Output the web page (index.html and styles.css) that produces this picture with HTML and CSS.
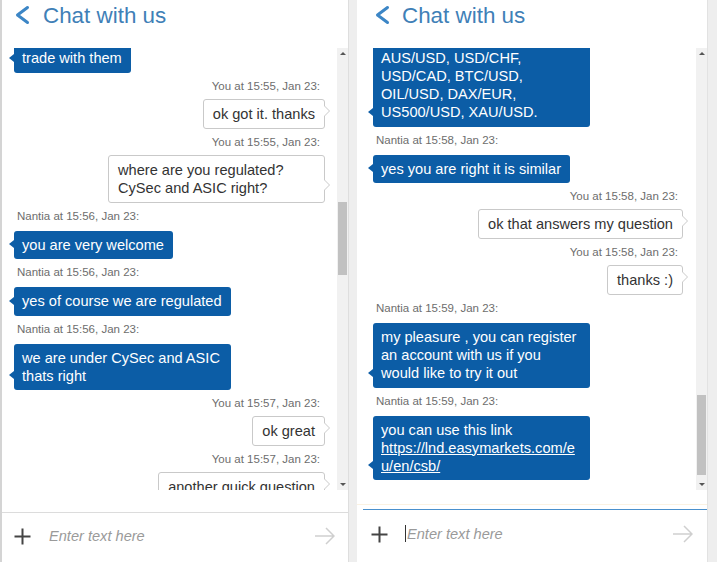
FILE: index.html
```html
<!DOCTYPE html>
<html lang="en">
<head>
<meta charset="utf-8">
<title>Chat with us</title>
<link rel="stylesheet" href="styles.css">
</head>
<body>
<div class="screen">
  <section class="panel panel--left">
    <header class="head">
      <svg class="chev" width="16" height="22" viewBox="0 0 16 22"><path d="M13.5 3.5 L3.5 11 L13.5 18.5" fill="none" stroke="#3c86c6" stroke-width="3" stroke-linecap="round" stroke-linejoin="round"/></svg>
      <h1 class="title">Chat with us</h1>
    </header>
    <div class="body">
      <div class="list">
        <div class="msg msg--agent first">trade with them</div>
        <div class="ts ts--user">You at 15:55, Jan 23:</div>
        <div class="msg msg--user">ok got it. thanks</div>
        <div class="ts ts--user">You at 15:55, Jan 23:</div>
        <div class="msg msg--user">where are you regulated? CySec and ASIC right?</div>
        <div class="ts ts--agent">Nantia at 15:56, Jan 23:</div>
        <div class="msg msg--agent">you are very welcome</div>
        <div class="ts ts--agent">Nantia at 15:56, Jan 23:</div>
        <div class="msg msg--agent">yes of course we are regulated</div>
        <div class="ts ts--agent">Nantia at 15:56, Jan 23:</div>
        <div class="msg msg--agent">we are under CySec and ASIC thats right</div>
        <div class="ts ts--user">You at 15:57, Jan 23:</div>
        <div class="msg msg--user">ok great</div>
        <div class="ts ts--user">You at 15:57, Jan 23:</div>
        <div class="msg msg--user">another quick question</div>
      </div>
      <div class="scrollbar">
        <div class="sb-btn"><span class="sb-up"></span></div>
        <div class="sb-track"><div class="sb-thumb" style="margin-top:143px;height:73px"></div></div>
        <div class="sb-btn"><span class="sb-down"></span></div>
      </div>
    </div>
    <div class="spacer"></div>
    <div class="composer composer--left">
      <svg class="plus" width="17" height="17" viewBox="0 0 17 17"><path d="M8.5 0.5 V16.5 M0.5 8.5 H16.5" stroke="#444" stroke-width="2"/></svg>
      <span class="placeholder">Enter text here</span>
      <svg class="send" width="20" height="18" viewBox="0 0 20 18"><path d="M0 9 H19 M11 1 L19 9 L11 17" fill="none" stroke="#cfcfcf" stroke-width="1.5"/></svg>
    </div>
  </section>

  <div class="divider"></div>

  <section class="panel panel--right">
    <header class="head">
      <svg class="chev" width="16" height="22" viewBox="0 0 16 22"><path d="M13.5 3.5 L3.5 11 L13.5 18.5" fill="none" stroke="#3c86c6" stroke-width="3" stroke-linecap="round" stroke-linejoin="round"/></svg>
      <h1 class="title">Chat with us</h1>
    </header>
    <div class="body">
      <div class="list">
        <div class="msg msg--agent first">AUS/USD, USD/CHF, USD/CAD, BTC/USD, OIL/USD, DAX/EUR, US500/USD, XAU/USD.</div>
        <div class="ts ts--agent">Nantia at 15:58, Jan 23:</div>
        <div class="msg msg--agent">yes you are right it is similar</div>
        <div class="ts ts--user">You at 15:58, Jan 23:</div>
        <div class="msg msg--user">ok that answers my question</div>
        <div class="ts ts--user">You at 15:58, Jan 23:</div>
        <div class="msg msg--user">thanks :)</div>
        <div class="ts ts--agent">Nantia at 15:59, Jan 23:</div>
        <div class="msg msg--agent">my pleasure , you can register an account with us if you would like to try it out</div>
        <div class="ts ts--agent">Nantia at 15:59, Jan 23:</div>
        <div class="msg msg--agent">you can use this link <a class="link" href="#">https://lnd.easymarkets.com/e<br>u/en/csb/</a></div>
      </div>
      <div class="scrollbar">
        <div class="sb-btn"><span class="sb-up"></span></div>
        <div class="sb-track"><div class="sb-thumb" style="margin-top:336px;height:80px"></div></div>
        <div class="sb-btn"><span class="sb-down"></span></div>
      </div>
    </div>
    <div class="spacer spacer--right"></div>
    <div class="composer composer--right">
      <svg class="plus" width="17" height="17" viewBox="0 0 17 17"><path d="M8.5 0.5 V16.5 M0.5 8.5 H16.5" stroke="#444" stroke-width="2"/></svg>
      <span class="caret"></span>
      <span class="placeholder">Enter text here</span>
      <svg class="send" width="20" height="18" viewBox="0 0 20 18"><path d="M0 9 H19 M11 1 L19 9 L11 17" fill="none" stroke="#cfcfcf" stroke-width="1.5"/></svg>
    </div>
  </section>

  <div class="edge"></div>
</div>
</body>
</html>
```

FILE: styles.css
```css
* { box-sizing: border-box; }

html, body {
  margin: 0;
  padding: 0;
  background: #fff;
}

body {
  font-family: "Liberation Sans", Arial, sans-serif;
  width: 717px;
  height: 562px;
  overflow: hidden;
}

.screen {
  display: flex;
  height: 562px;
  border-left: 2px solid #d4d4d4;
}

.panel {
  display: flex;
  flex-direction: column;
  background: #fff;
  height: 562px;
}

.panel--left { width: 346px; }
.panel--right { width: 350px; }

.divider {
  width: 9px;
  background: #eeeeee;
  border-left: 1px solid #dedede;
}

.edge {
  width: 10px;
  background: #eeeeee;
  border-left: 1px solid #e2e2e2;
}

/* header */
.head {
  height: 48px;
  display: flex;
  align-items: flex-start;
  padding-top: 4px;
}

.panel--left .head { padding-left: 12px; }
.panel--right .head { padding-left: 17px; }

.chev { flex: none; }

.title {
  margin: 0 0 0 13px;
  font-size: 22.4px;
  line-height: 24px;
  font-weight: normal;
  color: #3f80b7;
}
.panel--right .title { margin-left: 12px; }

/* message body */
.body {
  height: 442px;
  display: flex;
}

.list {
  flex: 1;
  overflow: hidden;
  display: flex;
  flex-direction: column;
  align-items: flex-start;
}

.panel--left .list { padding: 0 12px 0 12px; }
.panel--right .list { padding: 0 13px 0 16px; }

.msg {
  position: relative;
  max-width: 217px;
  font-size: 14.6px;
  line-height: 18px;
  border-radius: 3px;
}

.msg.first { margin-top: -4px; }

.msg--agent {
  background: #0c5da6;
  color: #fff;
  padding: 5px 9px 5.5px 8px;
}

.msg--agent::before {
  content: "";
  position: absolute;
  left: -5px;
  bottom: 11px;
  border-right: 5px solid #0c5da6;
  border-top: 4px solid transparent;
  border-bottom: 4px solid transparent;
}

.msg--user {
  align-self: flex-end;
  background: #fff;
  color: #333;
  border: 1px solid #c9c9c9;
  padding: 5px 9px 5px 9px;
}

.msg--user::before {
  content: "";
  position: absolute;
  right: -6px;
  bottom: 11px;
  border-left: 6px solid #c9c9c9;
  border-top: 6px solid transparent;
  border-bottom: 6px solid transparent;
}

.msg--user::after {
  content: "";
  position: absolute;
  right: -5px;
  bottom: 12px;
  border-left: 5px solid #fff;
  border-top: 5px solid transparent;
  border-bottom: 5px solid transparent;
}

.link {
  color: #fff;
  text-decoration: underline;
}

.ts {
  font-size: 11.5px;
  line-height: 14px;
  color: #6d6d6d;
  margin-top: 6px;
}

.ts--user {
  align-self: flex-end;
  margin-right: 5px;
  margin-bottom: 6px;
}

.ts--agent {
  margin-left: 3px;
  margin-bottom: 8px;
}

/* scrollbar */
.scrollbar {
  width: 11px;
  flex: none;
  display: flex;
  flex-direction: column;
  background: #f1f1f1;
}

.sb-btn {
  height: 11px;
  display: flex;
  align-items: center;
  justify-content: center;
}

.sb-up {
  border-bottom: 3px solid #555;
  border-left: 3px solid transparent;
  border-right: 3px solid transparent;
}

.sb-down {
  border-top: 3px solid #555;
  border-left: 3px solid transparent;
  border-right: 3px solid transparent;
}

.sb-track {
  flex: 1;
  display: flex;
  flex-direction: column;
  align-items: center;
}

.sb-thumb {
  width: 9px;
  background: #c1c1c1;
}

/* composer */
.spacer { height: 22px; }
.spacer--right {
  height: 15px;
  border-bottom: 1px solid #fbf2e2;
  margin-bottom: 4px;
}

.composer {
  flex: 1;
  display: flex;
  align-items: flex-start;
}

.composer--left {
  border-top: 1px solid #dcdcdc;
  padding: 14px 13px 0 12px;
}

.composer--right {
  border-top: 1px solid #4a90cc;
  margin-left: 6px;
  padding: 15px 14px 0 8px;
}

.plus { flex: none; margin-top: 1px; }

.placeholder {
  flex: 1;
  font-size: 14.6px;
  line-height: 18px;
  font-style: italic;
  color: #9a9a9a;
  margin-left: 18px;
}

.caret {
  width: 1px;
  height: 17px;
  background: #333;
  margin-left: 17px;
  flex: none;
}

.composer--right .placeholder { margin-left: 1px; }

.send { flex: none; }
```
